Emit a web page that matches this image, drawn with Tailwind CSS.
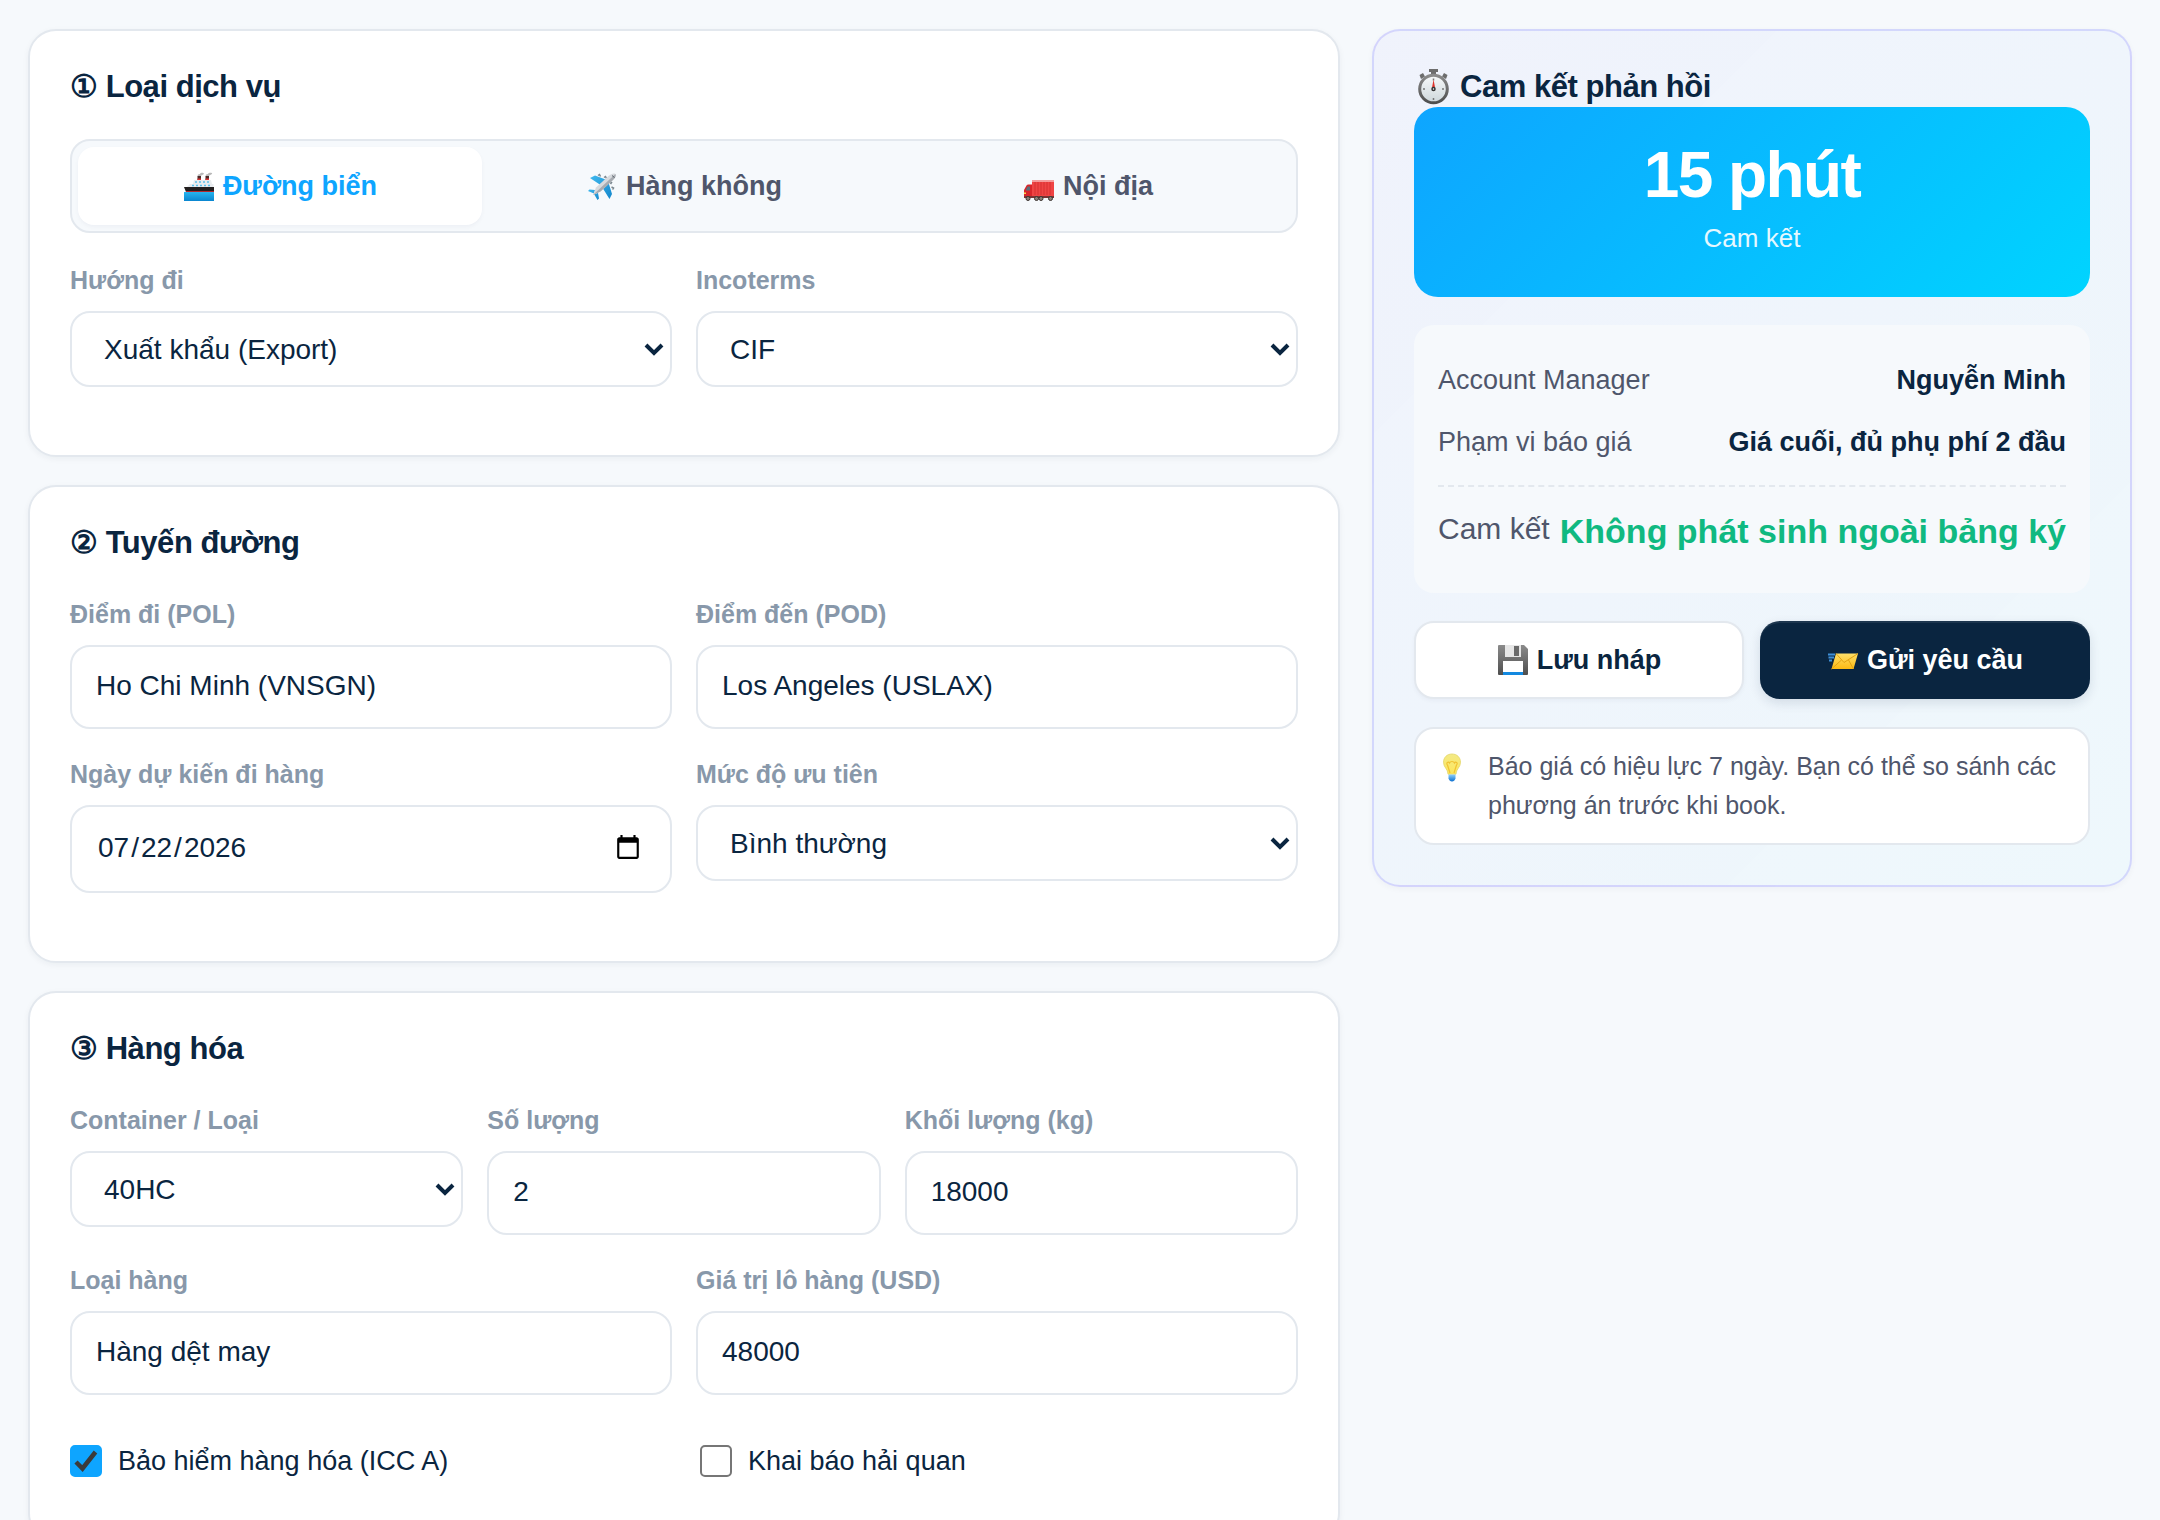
<!DOCTYPE html>
<html lang="vi">
<head>
  <meta charset="UTF-8" />
  <meta name="viewport" content="width=device-width, initial-scale=1.0"/>
  <title>Yêu cầu báo giá</title>
  <script src="https://cdn.jsdelivr.net/npm/@tailwindcss/browser@4"></script>
</head>
<body class="bg-[#f6f9fc] text-[#0a2540] font-['Liberation_Sans',Arial,sans-serif] text-[28px] min-h-screen">

  <!-- Shared icon gradients -->
  <svg class="absolute size-0" aria-hidden="true">
    <defs>
      <linearGradient id="water" x1="0" y1="0" x2="0" y2="1"><stop offset="0" stop-color="#27b4ee"/><stop offset="1" stop-color="#0a86d0"/></linearGradient>
      <linearGradient id="metal" x1="0" y1="0" x2="0" y2="1"><stop offset="0" stop-color="#8b8b8b"/><stop offset="1" stop-color="#4e4e4e"/></linearGradient>
      <linearGradient id="dial" x1="0" y1="0" x2="0" y2="1"><stop offset="0" stop-color="#f7f9fa"/><stop offset="1" stop-color="#cdd6da"/></linearGradient>
      <linearGradient id="paper" x1="0" y1="0" x2="0" y2="1"><stop offset="0" stop-color="#ffe06a"/><stop offset="1" stop-color="#fcb912"/></linearGradient>
      <linearGradient id="bulb" x1="0" y1="0" x2="0" y2="1"><stop offset="0" stop-color="#f3ea86"/><stop offset="1" stop-color="#fde65a"/></linearGradient>
      <linearGradient id="cap" x1="0" y1="0" x2="0" y2="1"><stop offset="0" stop-color="#8fd0fa"/><stop offset="1" stop-color="#0b6fd0"/></linearGradient>
      <linearGradient id="wing" x1="0" y1="0" x2="1" y2="1"><stop offset="0" stop-color="#3fb8ee"/><stop offset="1" stop-color="#1487cc"/></linearGradient>
    </defs>
  </svg>

  <main class="grid grid-cols-[minmax(0,1fr)_760px] items-start gap-8 px-7 pt-[29px] pb-7">

    <!-- Quote form -->
    <form class="flex flex-col gap-7">

      <!-- Service type -->
      <section class="bg-white border-2 border-[#e3e8ee] rounded-[28px] px-10 pt-10 pb-[68px] shadow-[0_2px_6px_rgba(10,37,64,0.05)]">
        <h2 class="text-[31px] leading-8 font-bold tracking-[-0.015em] mb-9">① Loại dịch vụ</h2>

        <div class="grid grid-cols-3 bg-[#f6f9fc] border-2 border-[#e3e8ee] rounded-[20px] p-1.5 mb-7 text-[27px] font-bold text-[#4f566b]">
          <button type="button" class="flex items-center justify-center gap-2 h-[78px] rounded-2xl bg-white text-[#0ea5ff] shadow-[0_2px_4px_rgba(10,37,64,0.04)]">
            <svg class="size-8" viewBox="0 0 32 32" aria-hidden="true">
              <path d="M15 7c-1-2 0-3 2-3 1-2 4-1 4 0-1 1-3 1-4 3zM23 7c-1-2 0-3 2-3 1-2 5-1 4 0-1 1-3 1-4 3z" fill="#b9b9b9"/>
              <path d="M14.500 6h3.500v4h-3.500zM22.500 6h3.500v4h-3.500z" fill="#4a2a2a"/>
              <path d="M14.500 8.500h3.500v1.500h-3.500zM22.500 8.500h3.500v1.500h-3.500z" fill="#d33"/>
              <path d="M11 10h17l1 4h1.500v4H3l4-4h3z" fill="#e9ecef"/>
              <path d="M12 12h2M16 12h2M20 12h2M24 12h2M9 15.500h2M13 15.500h2M17 15.500h2M21 15.500h2M25 15.500h2" stroke="#5cc0ea" stroke-width="1.500"/>
              <path d="M1 17h30v5H3z" fill="#231f1f"/>
              <path d="M3 21h28v1.500H3z" fill="#b5292f"/>
              <path d="M1 22h30v9H1z" fill="url(#water)"/>
            </svg>
            Đường biển
          </button>
          <button type="button" class="flex items-center justify-center gap-2 h-[78px] rounded-2xl">
            <svg class="size-8" viewBox="0 0 32 32" aria-hidden="true">
              <path d="M21 10L9 5.500 4 8l12 8zM22 11l4 13-2.500 5L16 17z" fill="url(#wing)"/>
              <path d="M9 20l-5.500-.5L2 21l6 2.500zM12 23l1 5.500-1.500 1.500L8 24z" fill="url(#wing)"/>
              <path d="M12 5.500l1.500-1 1 2M18 7.500l1.500-1 1 2M26.500 19.500l1-1.500-2-1M24.500 14l1-1.500-2-1" stroke="#7a868e" stroke-width="1.500" fill="none"/>
              <path d="M29.500 4c.8 2-.5 4-2.500 6L14.500 21.500 7 25l3-7.500L22.500 6c2.500-2 5-3 7-2z" fill="#d7dade"/>
              <path d="M29.500 4c.8 2-.5 4-2.500 6L14.500 21.500 7 25l17-16z" fill="#a7abb1"/>
              <path d="M26 5.500l2.500 2" stroke="#59636b" stroke-width="1"/>
            </svg>
            Hàng không
          </button>
          <button type="button" class="flex items-center justify-center gap-2 h-[78px] rounded-2xl">
            <svg class="size-8" viewBox="0 0 32 32" aria-hidden="true">
              <path d="M1 27v-7l2.500-4.500q.5-1 2-1H9V27z" fill="#d8262b"/>
              <path d="M3 19.500l1.500-3H7v4H3z" fill="#5c6f7a"/>
              <path d="M1 22.500h2v1.500H1z" fill="#ffd24a"/>
              <path d="M9 10.500h22V27H9z" fill="#ef4444"/>
              <path d="M9 10.500h22v1.500H9z" fill="#f59a9a"/>
              <path d="M12 12v13M15 12v13M18 12v13M21 12v13M24 12v13M27 12v13" stroke="#d63031" stroke-width="1"/>
              <path d="M1 26h30v2H1z" fill="#7b3434"/>
              <g fill="#8d8078" stroke="#3c3532" stroke-width="1"><circle cx="5" cy="28.500" r="2"/><circle cx="13.500" cy="28.500" r="2"/><circle cx="18" cy="28.500" r="2"/><circle cx="27.500" cy="28.500" r="2"/></g>
            </svg>
            Nội địa
          </button>
        </div>

        <div class="grid grid-cols-2 gap-x-6 gap-y-[26px] items-start">
          <div>
            <label for="direction" class="block text-[25px] leading-[38px] font-bold text-[#8898aa] mb-3">Hướng đi</label>
            <div class="relative">
              <select id="direction" class="w-full h-19 appearance-none bg-white border-2 border-[#e3e8ee] rounded-[20px] pl-8 pr-12 pt-0.5">
                <option>Xuất khẩu (Export)</option>
                <option>Nhập khẩu (Import)</option>
              </select>
              <svg class="absolute right-2 top-1/2 -translate-y-1/2 size-5 pointer-events-none" viewBox="0 0 20 20" fill="none" stroke="currentColor" stroke-width="4"><path d="M2 6l8 8 8-8"/></svg>
            </div>
          </div>
          <div>
            <label for="incoterms" class="block text-[25px] leading-[38px] font-bold text-[#8898aa] mb-3">Incoterms</label>
            <div class="relative">
              <select id="incoterms" class="w-full h-19 appearance-none bg-white border-2 border-[#e3e8ee] rounded-[20px] pl-8 pr-12 pt-0.5">
                <option>CIF</option>
                <option>FOB</option>
                <option>EXW</option>
              </select>
              <svg class="absolute right-2 top-1/2 -translate-y-1/2 size-5 pointer-events-none" viewBox="0 0 20 20" fill="none" stroke="currentColor" stroke-width="4"><path d="M2 6l8 8 8-8"/></svg>
            </div>
          </div>
        </div>
      </section>

      <!-- Route -->
      <section class="bg-white border-2 border-[#e3e8ee] rounded-[28px] px-10 pt-10 pb-[68px] shadow-[0_2px_6px_rgba(10,37,64,0.05)]">
        <h2 class="text-[31px] leading-8 font-bold tracking-[-0.015em] mb-9">② Tuyến đường</h2>

        <div class="grid grid-cols-2 gap-x-6 gap-y-[26px] items-start">
          <div>
            <label for="pol" class="block text-[25px] leading-[38px] font-bold text-[#8898aa] mb-3">Điểm đi (POL)</label>
            <input id="pol" type="text" value="Ho Chi Minh (VNSGN)" class="block w-full h-21 bg-white border-2 border-[#e3e8ee] rounded-[20px] px-6 pb-0.5">
          </div>
          <div>
            <label for="pod" class="block text-[25px] leading-[38px] font-bold text-[#8898aa] mb-3">Điểm đến (POD)</label>
            <input id="pod" type="text" value="Los Angeles (USLAX)" class="block w-full h-21 bg-white border-2 border-[#e3e8ee] rounded-[20px] px-6 pb-0.5">
          </div>
          <div>
            <label for="etd" class="block text-[25px] leading-[38px] font-bold text-[#8898aa] mb-3">Ngày dự kiến đi hàng</label>
            <input id="etd" type="date" value="2026-07-22" class="block w-full h-22 bg-white border-2 border-[#e3e8ee] rounded-[20px] px-6 pb-0.5 [&::-webkit-datetime-edit-month-field]:px-0.5 [&::-webkit-datetime-edit-day-field]:px-0.5 [&::-webkit-datetime-edit-year-field]:px-0.5 [&::-webkit-calendar-picker-indicator]:p-1">
          </div>
          <div>
            <label for="priority" class="block text-[25px] leading-[38px] font-bold text-[#8898aa] mb-3">Mức độ ưu tiên</label>
            <div class="relative">
              <select id="priority" class="w-full h-19 appearance-none bg-white border-2 border-[#e3e8ee] rounded-[20px] pl-8 pr-12 pt-0.5">
                <option>Bình thường</option>
                <option>Gấp</option>
              </select>
              <svg class="absolute right-2 top-1/2 -translate-y-1/2 size-5 pointer-events-none" viewBox="0 0 20 20" fill="none" stroke="currentColor" stroke-width="4"><path d="M2 6l8 8 8-8"/></svg>
            </div>
          </div>
        </div>
      </section>

      <!-- Cargo -->
      <section class="bg-white border-2 border-[#e3e8ee] rounded-[28px] p-10 shadow-[0_2px_6px_rgba(10,37,64,0.05)]">
        <h2 class="text-[31px] leading-8 font-bold tracking-[-0.015em] mb-9">③ Hàng hóa</h2>

        <div class="grid grid-cols-3 gap-x-6 items-start mb-[26px]">
          <div>
            <label for="container" class="block text-[25px] leading-[38px] font-bold text-[#8898aa] mb-3">Container / Loại</label>
            <div class="relative">
              <select id="container" class="w-full h-19 appearance-none bg-white border-2 border-[#e3e8ee] rounded-[20px] pl-8 pr-12 pt-0.5">
                <option>40HC</option>
                <option>40GP</option>
                <option>20GP</option>
              </select>
              <svg class="absolute right-2 top-1/2 -translate-y-1/2 size-5 pointer-events-none" viewBox="0 0 20 20" fill="none" stroke="currentColor" stroke-width="4"><path d="M2 6l8 8 8-8"/></svg>
            </div>
          </div>
          <div>
            <label for="quantity" class="block text-[25px] leading-[38px] font-bold text-[#8898aa] mb-3">Số lượng</label>
            <input id="quantity" type="number" value="2" class="block w-full h-21 bg-white border-2 border-[#e3e8ee] rounded-[20px] px-6 pb-0.5">
          </div>
          <div>
            <label for="weight" class="block text-[25px] leading-[38px] font-bold text-[#8898aa] mb-3">Khối lượng (kg)</label>
            <input id="weight" type="number" value="18000" class="block w-full h-21 bg-white border-2 border-[#e3e8ee] rounded-[20px] px-6 pb-0.5">
          </div>
        </div>

        <div class="grid grid-cols-2 gap-x-6 items-start mb-7">
          <div>
            <label for="commodity" class="block text-[25px] leading-[38px] font-bold text-[#8898aa] mb-3">Loại hàng</label>
            <input id="commodity" type="text" value="Hàng dệt may" class="block w-full h-21 bg-white border-2 border-[#e3e8ee] rounded-[20px] px-6 pb-0.5">
          </div>
          <div>
            <label for="cargoValue" class="block text-[25px] leading-[38px] font-bold text-[#8898aa] mb-3">Giá trị lô hàng (USD)</label>
            <input id="cargoValue" type="number" value="48000" class="block w-full h-21 bg-white border-2 border-[#e3e8ee] rounded-[20px] px-6 pb-0.5">
          </div>
        </div>

        <div class="grid grid-cols-2 gap-x-8 py-4 text-[27px] leading-11">
          <label class="relative flex items-center gap-4">
            <input type="checkbox" checked class="peer appearance-none size-8 rounded-[5px] border-2 border-[#767676] bg-white checked:border-[#0ea5ff] checked:bg-[#0ea5ff]">
            <svg class="absolute left-0 size-8 pointer-events-none invisible peer-checked:visible" viewBox="0 0 32 32" fill="none" stroke="#3b3b3b" stroke-width="4.500"><path d="M6 17l6.500 6.500L25.500 7"/></svg>
            Bảo hiểm hàng hóa (ICC A)
          </label>
          <label class="relative flex items-center gap-4">
            <input type="checkbox" class="peer appearance-none size-8 rounded-[5px] border-2 border-[#767676] bg-white checked:border-[#0ea5ff] checked:bg-[#0ea5ff]">
            <svg class="absolute left-0 size-8 pointer-events-none invisible peer-checked:visible" viewBox="0 0 32 32" fill="none" stroke="#3b3b3b" stroke-width="4.500"><path d="M6 17l6.500 6.500L25.500 7"/></svg>
            Khai báo hải quan
          </label>
        </div>
      </section>
    </form>

    <!-- Response commitment -->
    <aside class="bg-[linear-gradient(135deg,rgba(99,91,255,0.04),rgba(0,212,255,0.03))] border-2 border-[#635bff]/20 rounded-[28px] p-10 shadow-[0_2px_6px_rgba(10,37,64,0.04)]">
      <h2 class="flex items-center gap-2.5 h-8 text-[31px] leading-8 font-bold tracking-[-0.015em] mb-1">
        <svg class="size-9" viewBox="0 0 36 36" aria-hidden="true">
          <path d="M15 0h9v3h-2v4h-5V3h-2z" fill="#6d6d6d"/>
          <path d="M5.500 6l3.500-2 2 3.500-4 2.500zM33.500 6L30 4l-2 3.500 4 2.500z" fill="#6d6d6d"/>
          <circle cx="19.500" cy="20" r="13.800" fill="url(#dial)" stroke="url(#metal)" stroke-width="3"/>
          <path d="M19.500 9.500v2M19.500 29v2M9 20h2M28 20h2" stroke="#777" stroke-width="1.500"/>
          <path d="M19.500 10.500l1.500 8h-3z" fill="#e0342b"/>
          <circle cx="19.500" cy="20" r="1.500" fill="#fff" stroke="#333" stroke-width="1.500"/>
        </svg>
        Cam kết phản hồi
      </h2>

      <div class="bg-[linear-gradient(135deg,#0ea5ff,#00d4ff)] text-white text-center rounded-3xl pt-8 pb-9 mb-7 h-[190px]">
        <div class="text-[64px] leading-[72px] font-bold tracking-tight">15 phút</div>
        <div class="text-[26px] leading-[38px] mt-2 opacity-90">Cam kết</div>
      </div>

      <div class="bg-[#f6f9fc] rounded-[20px] px-6 pt-6 pb-7 mb-7 text-[27px]">
        <div class="flex justify-between items-center h-[62px]">
          <span class="text-[#4f566b]">Account Manager</span>
          <span class="font-bold">Nguyễn Minh</span>
        </div>
        <div class="flex justify-between items-center h-[62px]">
          <span class="text-[#4f566b]">Phạm vi báo giá</span>
          <span class="font-bold">Giá cuối, đủ phụ phí 2 đầu</span>
        </div>
        <div class="flex justify-between items-start border-t-2 border-dashed border-[#e3e8ee] mt-3 pt-[18px] h-20">
          <span class="text-[30px] leading-12 text-[#4f566b]">Cam kết</span>
          <span class="text-[34px] leading-13 font-bold text-[#10b981] whitespace-nowrap">Không phát sinh ngoài bảng ký</span>
        </div>
      </div>

      <div class="grid grid-cols-2 gap-4 mb-7 text-[27px] font-bold">
        <button type="button" class="flex items-center justify-center gap-2 h-[78px] bg-white border-2 border-[#e3e8ee] rounded-[20px] shadow-[0_2px_4px_rgba(10,37,64,0.04)]">
          <svg class="size-8" viewBox="0 0 32 32" aria-hidden="true">
            <path d="M2 1h25l4 4v25q0 1-1 1H2q-1 0-1-1V2q0-1 1-1z" fill="url(#metal)"/>
            <path d="M8 1h16v12H8z" fill="#e6e6e6"/>
            <path d="M17 2h5v10h-5z" fill="#6a6a6a"/>
            <path d="M6 17h20v14H6z" fill="#fff"/>
            <path d="M6 28h20v3H6z" fill="#1389e0"/>
          </svg>
          Lưu nháp
        </button>
        <button type="button" class="flex items-center justify-center gap-2 h-[78px] bg-[#0a2540] text-white rounded-[20px] shadow-[0_4px_12px_rgba(10,37,64,0.12),inset_0_2px_0_rgba(255,255,255,0.08)]">
          <svg class="size-8" viewBox="0 0 32 32" aria-hidden="true">
            <path d="M1 10.500h7M1.500 13.500h5.500M2 16.500h3" stroke="#3f8fd6" stroke-width="1.800"/>
            <path d="M9 9.500h22L26.500 25H4.500z" fill="url(#paper)"/>
            <path d="M9 9.500l8 9 14-9M4.500 25l10-9M26.500 25l-5-9" stroke="#e2a312" stroke-width="1" fill="none"/>
          </svg>
          Gửi yêu cầu
        </button>
      </div>

      <div class="flex items-start gap-5 bg-white border-2 border-[#e3e8ee] rounded-[20px] px-5 py-[18px] text-[25px] leading-[39px] text-[#4f566b]">
        <span class="flex items-center h-[39px] shrink-0">
          <svg class="size-8" viewBox="0 0 32 32" aria-hidden="true">
            <path d="M16 3c5 0 8.500 3.500 8.500 8.200 0 5.300-4.500 6.800-4.500 12h-8c0-5.200-4.500-6.700-4.500-12C7.500 6.500 11 3 16 3z" fill="url(#bulb)" stroke="#e3d56a" stroke-width=".8"/>
            <path d="M14 22l-2.500-8M18 22l2.500-8M11.500 14c-2-2 1-4 2-2 1-2 4-2 5 0 1-2 4 0 2 2" stroke="#f1c232" stroke-width="1.200" fill="none"/>
            <path d="M12.500 23.500h7v4q-1 3-3.500 3t-3.500-3z" fill="url(#cap)"/>
          </svg>
        </span>
        <p>Báo giá có hiệu lực 7 ngày. Bạn có thể so sánh các phương án trước khi book.</p>
      </div>
    </aside>

  </main>

</body>
</html>
